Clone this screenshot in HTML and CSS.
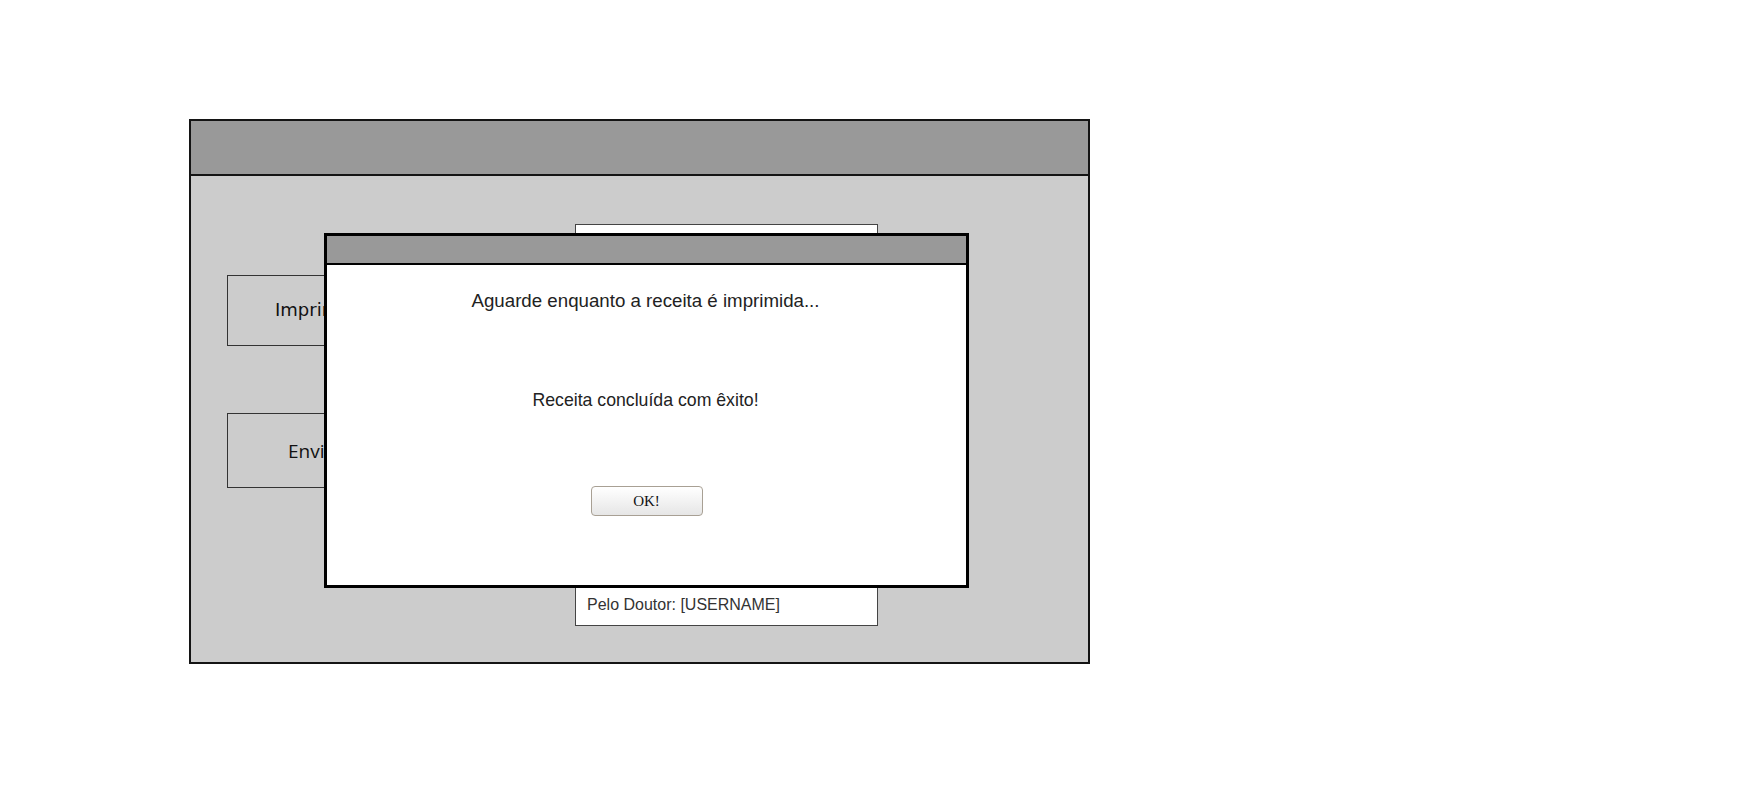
FILE: index.html
```html
<!DOCTYPE html>
<html lang="pt">
<head>
<meta charset="utf-8">
<title>Receita</title>
<link rel="stylesheet" href="styles.css">
</head>
<body>
<div class="page">
  <div class="window">
    <div class="window-header"></div>
    <div class="window-body">
      <div class="actions">
        <div class="action action-print">Imprimir</div>
        <div class="action action-send">Enviar</div>
      </div>
      <div class="doc">
        <div class="doc-content"></div>
        <div class="doc-footer">Pelo Doutor: [USERNAME]</div>
      </div>
    </div>
    <div class="dialog">
      <div class="dialog-header"></div>
      <div class="dialog-body">
        <p class="msg msg-wait">Aguarde enquanto a receita é imprimida...</p>
        <p class="msg msg-done">Receita concluída com êxito!</p>
        <button class="ok-btn" type="button">OK!</button>
      </div>
    </div>
  </div>
</div>
</body>
</html>
```

FILE: styles.css
```css
* { box-sizing: border-box; }
html, body { margin: 0; padding: 0; background: #fff; }
body { font-family: "Liberation Sans", Arial, sans-serif; }

.page {
  padding: 119px 0 0 189px;
}

.window {
  position: relative;
  width: 901px;
  height: 545px;
  border: 2px solid #141414;
  background: #cccccc;
  display: flex;
  flex-direction: column;
}

.window-header {
  height: 55px;
  background: #999999;
  border-bottom: 2px solid #141414;
  flex: none;
}

.window-body {
  flex: 1;
  display: flex;
  padding: 48px 0 0 36px;
  gap: 148px;
}

.actions {
  display: flex;
  flex-direction: column;
  padding-top: 51px;
  gap: 67px;
}

.action {
  width: 200px;
  height: 71px;
  border: 1px solid #333;
  display: flex;
  align-items: center;
  font-size: 19px;
  color: #111;
  white-space: nowrap;
}
.action-print { font-family: "DejaVu Sans", sans-serif; font-size: 18px; padding-left: 47px; padding-bottom: 2px; }
.action-send { height: 75px; padding-left: 60px; font-family: "Open Sans", sans-serif; font-size: 19px; }

.doc {
  width: 303px;
  height: 402px;
  background: #fff;
  border: 1px solid #444;
  display: flex;
  flex-direction: column;
}
.doc-content { flex: 1; }
.doc-footer {
  height: 44px;
  padding: 15px 0 0 11px;
  font-size: 16px;
  color: #333;
}

.dialog {
  position: absolute;
  left: 133px;
  top: 112px;
  width: 645px;
  height: 355px;
  border: 3px solid #000;
  background: #fff;
  display: flex;
  flex-direction: column;
}

.dialog-header {
  height: 29px;
  background: #999999;
  border-bottom: 2px solid #000;
  flex: none;
}

.dialog-body {
  flex: 1;
  display: flex;
  flex-direction: column;
  align-items: center;
  padding-right: 2px;
}

.msg {
  margin: 0;
  color: #222;
  line-height: 20px;
}
.msg-wait { margin-top: 26px; font-size: 18.7px; }
.msg-done { margin-top: 79px; font-size: 17.7px; }

.ok-btn {
  margin-top: 76px;
  width: 112px;
  height: 30px;
  border: 1px solid #a8a094;
  border-radius: 4px;
  background: linear-gradient(#ffffff, #e6e6e6);
  font-family: "Liberation Serif", "Times New Roman", serif;
  font-size: 15px;
  color: #111;
  padding: 0;
  margin-left: 2px;
}
```
